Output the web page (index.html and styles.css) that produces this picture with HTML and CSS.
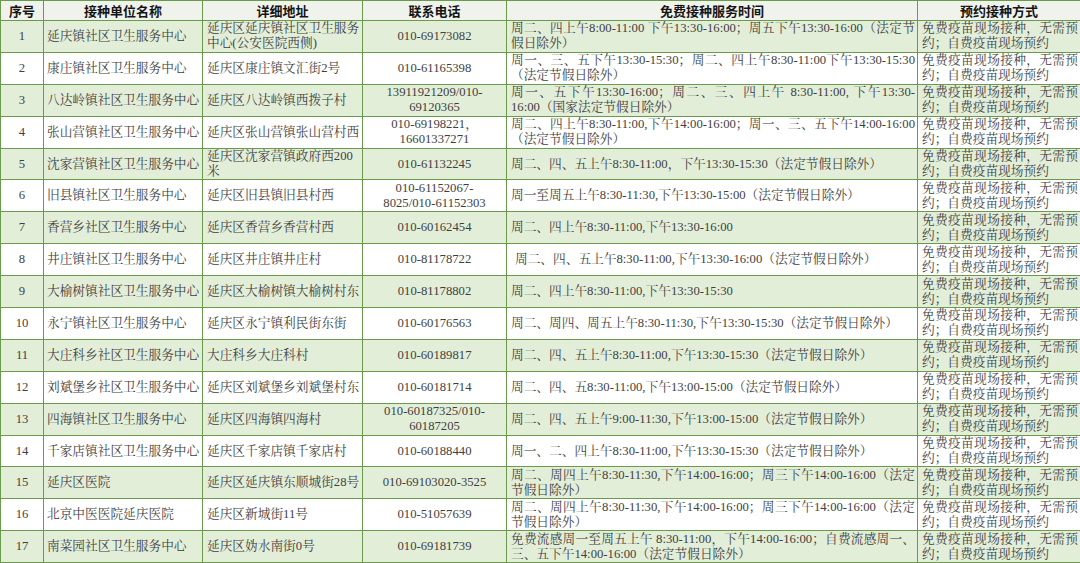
FILE: index.html
```html
<!DOCTYPE html>
<html lang="zh-CN">
<head>
<meta charset="utf-8">
<title>延庆区接种单位</title>
<link rel="stylesheet" href="styles.css">
</head>
<body>
<table class="sheet">
  <colgroup>
    <col class="w-no"><col class="w-name"><col class="w-addr"><col class="w-tel"><col class="w-time"><col class="w-way">
  </colgroup>
  <thead>
    <tr class="head">
      <th>序号</th><th>接种单位名称</th><th>详细地址</th><th>联系电话</th><th>免费接种服务时间</th><th>预约接种方式</th>
    </tr>
  </thead>
  <tbody>
    <tr class="odd">
      <td class="c-no">1</td><td class="c-name">延庆镇社区卫生服务中心</td>
      <td class="c-txt">延庆区延庆镇社区卫生服务<br>中心(公安医院西侧)</td>
      <td class="c-tel">010-69173082</td>
      <td class="c-txt"><span class="jl">周二、四上午8:00-11:00 下午13:30-16:00；周五下午13:30-16:00（法定节</span>假日除外）</td>
      <td class="c-txt"><span class="jl">免费疫苗现场接种，无需预</span>约；自费疫苗现场预约</td>
    </tr>
    <tr>
      <td class="c-no">2</td><td class="c-name">康庄镇社区卫生服务中心</td>
      <td class="c-txt">延庆区康庄镇文汇街2号</td>
      <td class="c-tel">010-61165398</td>
      <td class="c-txt"><span class="jl">周一、三、五下午13:30-15:30；周二、四上午8:30-11:00下午13:30-15:30</span>（法定节假日除外）</td>
      <td class="c-txt"><span class="jl">免费疫苗现场接种，无需预</span>约；自费疫苗现场预约</td>
    </tr>
    <tr class="odd">
      <td class="c-no">3</td><td class="c-name">八达岭镇社区卫生服务中心</td>
      <td class="c-txt">延庆区八达岭镇西拨子村</td>
      <td class="c-tel">13911921209/010-<br>69120365</td>
      <td class="c-txt"><span class="jl">周一、五下午13:30-16:00；周二、三、四上午 8:30-11:00, 下午13:30-</span>16:00（国家法定节假日除外）</td>
      <td class="c-txt"><span class="jl">免费疫苗现场接种，无需预</span>约；自费疫苗现场预约</td>
    </tr>
    <tr>
      <td class="c-no">4</td><td class="c-name">张山营镇社区卫生服务中心</td>
      <td class="c-txt">延庆区张山营镇张山营村西</td>
      <td class="c-tel">010-69198221，<br>16601337271</td>
      <td class="c-txt"><span class="jl">周二、四上午8:30-11:00,下午14:00-16:00；周一、三、五下午14:00-16:00</span>（法定节假日除外）</td>
      <td class="c-txt"><span class="jl">免费疫苗现场接种，无需预</span>约；自费疫苗现场预约</td>
    </tr>
    <tr class="odd">
      <td class="c-no">5</td><td class="c-name">沈家营镇社区卫生服务中心</td>
      <td class="c-txt">延庆区沈家营镇政府西200<br>米</td>
      <td class="c-tel">010-61132245</td>
      <td class="c-txt">周二、四、五上午8:30-11:00，下午13:30-15:30（法定节假日除外）</td>
      <td class="c-txt"><span class="jl">免费疫苗现场接种，无需预</span>约；自费疫苗现场预约</td>
    </tr>
    <tr>
      <td class="c-no">6</td><td class="c-name">旧县镇社区卫生服务中心</td>
      <td class="c-txt">延庆区旧县镇旧县村西</td>
      <td class="c-tel">010-61152067-<br>8025/010-61152303</td>
      <td class="c-txt">周一至周五上午8:30-11:30,下午13:30-15:00（法定节假日除外）</td>
      <td class="c-txt"><span class="jl">免费疫苗现场接种，无需预</span>约；自费疫苗现场预约</td>
    </tr>
    <tr class="odd">
      <td class="c-no">7</td><td class="c-name">香营乡社区卫生服务中心</td>
      <td class="c-txt">延庆区香营乡香营村西</td>
      <td class="c-tel">010-60162454</td>
      <td class="c-txt">周二、四上午8:30-11:00,下午13:30-16:00</td>
      <td class="c-txt"><span class="jl">免费疫苗现场接种，无需预</span>约；自费疫苗现场预约</td>
    </tr>
    <tr>
      <td class="c-no">8</td><td class="c-name">井庄镇社区卫生服务中心</td>
      <td class="c-txt">延庆区井庄镇井庄村</td>
      <td class="c-tel">010-81178722</td>
      <td class="c-txt c-indent">周二、四、五上午8:30-11:00,下午13:30-16:00（法定节假日除外）</td>
      <td class="c-txt"><span class="jl">免费疫苗现场接种，无需预</span>约；自费疫苗现场预约</td>
    </tr>
    <tr class="odd">
      <td class="c-no">9</td><td class="c-name">大榆树镇社区卫生服务中心</td>
      <td class="c-txt">延庆区大榆树镇大榆树村东</td>
      <td class="c-tel">010-81178802</td>
      <td class="c-txt">周二、四上午8:30-11:00,下午13:30-15:30</td>
      <td class="c-txt"><span class="jl">免费疫苗现场接种，无需预</span>约；自费疫苗现场预约</td>
    </tr>
    <tr>
      <td class="c-no">10</td><td class="c-name">永宁镇社区卫生服务中心</td>
      <td class="c-txt">延庆区永宁镇利民街东街</td>
      <td class="c-tel">010-60176563</td>
      <td class="c-txt">周二、周四、周五上午8:30-11:30,下午13:30-15:30（法定节假日除外）</td>
      <td class="c-txt"><span class="jl">免费疫苗现场接种，无需预</span>约；自费疫苗现场预约</td>
    </tr>
    <tr class="odd">
      <td class="c-no">11</td><td class="c-name">大庄科乡社区卫生服务中心</td>
      <td class="c-txt">大庄科乡大庄科村</td>
      <td class="c-tel">010-60189817</td>
      <td class="c-txt">周二、四、五上午8:30-11:00,下午13:30-15:30（法定节假日除外）</td>
      <td class="c-txt"><span class="jl">免费疫苗现场接种，无需预</span>约；自费疫苗现场预约</td>
    </tr>
    <tr>
      <td class="c-no">12</td><td class="c-name">刘斌堡乡社区卫生服务中心</td>
      <td class="c-txt">延庆区刘斌堡乡刘斌堡村东</td>
      <td class="c-tel">010-60181714</td>
      <td class="c-txt">周二、四、五8:30-11:00,下午13:00-15:00（法定节假日除外）</td>
      <td class="c-txt"><span class="jl">免费疫苗现场接种，无需预</span>约；自费疫苗现场预约</td>
    </tr>
    <tr class="odd">
      <td class="c-no">13</td><td class="c-name">四海镇社区卫生服务中心</td>
      <td class="c-txt">延庆区四海镇四海村</td>
      <td class="c-tel">010-60187325/010-<br>60187205</td>
      <td class="c-txt">周二、四、五上午9:00-11:30,下午13:00-15:00（法定节假日除外）</td>
      <td class="c-txt"><span class="jl">免费疫苗现场接种，无需预</span>约；自费疫苗现场预约</td>
    </tr>
    <tr>
      <td class="c-no">14</td><td class="c-name">千家店镇社区卫生服务中心</td>
      <td class="c-txt">延庆区千家店镇千家店村</td>
      <td class="c-tel">010-60188440</td>
      <td class="c-txt">周一、二、四上午8:30-11:00,下午13:30-15:30（法定节假日除外）</td>
      <td class="c-txt"><span class="jl">免费疫苗现场接种，无需预</span>约；自费疫苗现场预约</td>
    </tr>
    <tr class="odd">
      <td class="c-no">15</td><td class="c-name">延庆区医院</td>
      <td class="c-txt">延庆区延庆镇东顺城街28号</td>
      <td class="c-tel">010-69103020-3525</td>
      <td class="c-txt"><span class="jl">周二、周四上午8:30-11:30,下午14:00-16:00；周三下午14:00-16:00（法定</span>节假日除外）</td>
      <td class="c-txt"><span class="jl">免费疫苗现场接种，无需预</span>约；自费疫苗现场预约</td>
    </tr>
    <tr>
      <td class="c-no">16</td><td class="c-name">北京中医医院延庆医院</td>
      <td class="c-txt">延庆区新城街11号</td>
      <td class="c-tel">010-51057639</td>
      <td class="c-txt"><span class="jl">周二、周四上午8:30-11:30,下午14:00-16:00；周三下午14:00-16:00（法定</span>节假日除外）</td>
      <td class="c-txt"><span class="jl">免费疫苗现场接种，无需预</span>约；自费疫苗现场预约</td>
    </tr>
    <tr class="odd">
      <td class="c-no">17</td><td class="c-name">南菜园社区卫生服务中心</td>
      <td class="c-txt">延庆区妫水南街0号</td>
      <td class="c-tel">010-69181739</td>
      <td class="c-txt"><span class="jl">免费流感周一至周五上午 8:30-11:00，下午14:00-16:00；自费流感周一、</span>三、五下午14:00-16:00（法定节假日除外）</td>
      <td class="c-txt"><span class="jl">免费疫苗现场接种，无需预</span>约；自费疫苗现场预约</td>
    </tr>
  </tbody>
</table>
</body>
</html>
```
FILE: styles.css
```css
html, body {
  margin: 0;
  padding: 0;
  background: #ffffff;
}

.sheet {
  width: 1080px;
  table-layout: fixed;
  border-collapse: collapse;
  font-family: "Liberation Serif", "Noto Serif CJK SC", "Noto Sans CJK SC", serif;
  font-size: 12.7px;
  line-height: 15px;
  color: #3f3f3f;
}

.w-no { width: 43px; }
.w-name { width: 159px; }
.w-addr { width: 160px; }
.w-tel { width: 144px; }
.w-time { width: 411px; }
.w-way { width: 163px; }

.sheet th,
.sheet td {
  border: 1px solid #6a9a4b;
  vertical-align: middle;
  overflow: hidden;
}

.head {
  height: 20px;
  background: #f0f3ec;
}

.head th {
  font-family: "Noto Sans CJK SC", sans-serif;
  font-weight: 700;
  font-size: 13px;
  line-height: 16px;
  color: #151515;
  padding: 0;
  text-align: center;
}

tbody tr {
  height: 31.9px;
  background: #ffffff;
}

tbody tr.odd {
  background: #e3eed9;
}

.c-no {
  text-align: center;
  padding: 0;
}

.c-name {
  text-align: left;
  white-space: nowrap;
  padding: 0 0 0 3px;
}

.c-txt {
  text-align: left;
  padding: 0 2px 0 4px;
}

.c-indent {
  padding-left: 8px;
}

.c-tel {
  text-align: center;
  padding: 0;
}

.jl {
  display: block;
  white-space: nowrap;
  text-align: justify;
  text-align-last: justify;
}
```
